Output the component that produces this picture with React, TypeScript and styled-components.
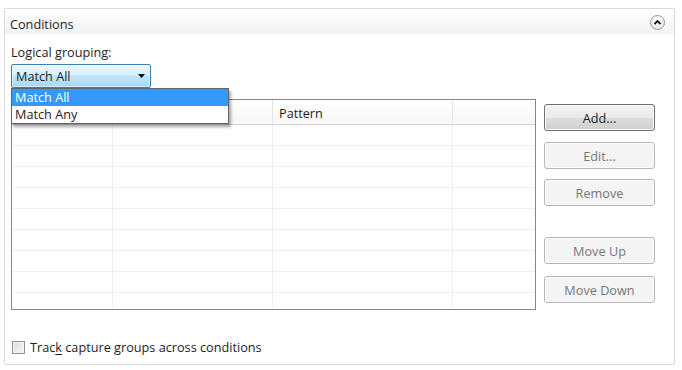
import React from "react";
import styled, { createGlobalStyle } from "styled-components";

const Global = createGlobalStyle`
  html, body { margin: 0; padding: 0; background: #ffffff; }
  body { font-family: "Open Sans", "Noto Sans", sans-serif; font-size: 12.7px; color: #1e1e1e; }
  * { box-sizing: border-box; }
`;

const Page = styled.div`
  width: 682px;
  height: 370px;
  padding: 8px 7px 5px 4px;
  background: #ffffff;
`;

const Panel = styled.section`
  width: 671px;
  height: 357px;
  border: 1px solid #dadada;
  border-radius: 2px;
  display: flex;
  flex-direction: column;
`;

const Header = styled.div`
  height: 25px;
  display: flex;
  align-items: center;
  justify-content: space-between;
  padding: 0 9px 0 5px;
  background: linear-gradient(#ffffff, #f2f2f2);
`;

const Title = styled.span`
  font-size: 12.7px;
  padding-top: 5px;
`;

const CollapseButton = styled.button`
  width: 15px;
  height: 15px;
  border-radius: 50%;
  border: 1px solid #9a9a9a;
  background: radial-gradient(circle at 50% 30%, #ffffff, #e2e2e2);
  padding: 0;
  display: flex;
  align-items: center;
  justify-content: center;
  margin-top: 2px;
`;

const Body = styled.div`
  flex: 1;
  display: flex;
  flex-direction: column;
  padding: 10px 6px 0 6px;
`;

const Label = styled.div`
  font-size: 12.7px;
  line-height: 16px;
  height: 16px;
`;

const U = styled.span`
  text-decoration: underline;
  text-underline-offset: 2px;
`;

const ComboWrap = styled.div`
  position: relative;
  margin-top: 4px;
  width: 140px;
  z-index: 2;
`;

const Combo = styled.div`
  height: 24px;
  border: 1px solid #3c7fb1;
  border-radius: 2px;
  background: linear-gradient(#eaf6fd 0%, #d9f0fc 45%, #bee6fd 50%, #a7d9f5 100%);
  display: flex;
  align-items: center;
  justify-content: space-between;
  padding: 0 5px 0 4px;
  font-size: 12.7px;
  box-shadow: inset 0 0 0 1px rgba(255, 255, 255, 0.5);
`;

const DropList = styled.ul`
  position: absolute;
  left: 0;
  top: 24px;
  width: 218px;
  margin: 0;
  padding: 0;
  list-style: none;
  background: #ffffff;
  border: 1px solid #646464;
  box-shadow: 2px 3px 3px rgba(0, 0, 0, 0.35);
`;

const DropItem = styled.li<{ $active?: boolean }>`
  height: 17px;
  line-height: 17px;
  padding-left: 3px;
  font-size: 12.7px;
  background: ${(p) => (p.$active ? "#3399ff" : "transparent")};
  color: ${(p) => (p.$active ? "#ffffff" : "#1e1e1e")};
`;

const Main = styled.div`
  display: flex;
  gap: 8px;
  margin-top: 11px;
`;

const Grid = styled.div`
  width: 525px;
  height: 211px;
  border: 1px solid #828790;
  display: flex;
  flex-direction: column;
  overflow: hidden;
`;

const HeadRow = styled.div`
  display: grid;
  grid-template-columns: 101px 160px 180px 1fr;
  height: 25px;
  flex-shrink: 0;
  border-bottom: 1px solid #d5d5d5;
  background: linear-gradient(#ffffff, #f6f7f8);
`;

const HeadCell = styled.div`
  border-right: 1px solid #e3e4e6;
  padding: 4px 0 0 6px;
  font-size: 12.7px;
  &:last-child { border-right: none; }
`;

const Row = styled.div`
  display: grid;
  grid-template-columns: 101px 160px 180px 1fr;
  height: 21px;
  flex-shrink: 0;
  border-bottom: 1px solid #f0f0f0;
`;

const Cell = styled.div`
  border-right: 1px solid #f0f0f0;
  &:last-child { border-right: none; }
`;

const Buttons = styled.div`
  display: flex;
  flex-direction: column;
  padding-top: 5px;
`;

const Btn = styled.button<{ $default?: boolean; $gap?: number }>`
  width: 111px;
  height: 27px;
  margin-top: ${(p) => p.$gap ?? 0}px;
  border-radius: 3px;
  font-family: "Open Sans", "Noto Sans", sans-serif;
  font-size: 12.7px;
  padding: 0;
  border: 1px solid ${(p) => (p.$default ? "#707070" : "#b7b7b7")};
  color: ${(p) => (p.$default ? "#1e1e1e" : "#777777")};
  background: ${(p) =>
    p.$default
      ? "linear-gradient(#f2f2f2 0%, #ebebeb 50%, #dddddd 51%, #cfcfcf 100%)"
      : "#f4f4f4"};
  box-shadow: ${(p) => (p.$default ? "inset 0 0 0 1px #fbfbfb" : "inset 0 0 0 1px #fcfcfc")};
`;

const CheckRow = styled.label`
  display: flex;
  align-items: center;
  gap: 5px;
  margin-top: auto;
  margin-bottom: 8px;
  padding-left: 1px;
  font-size: 12.7px;
`;

const Box = styled.span`
  width: 13px;
  height: 13px;
  border: 1px solid #8e8f8f;
  background: linear-gradient(135deg, #dcdcdc, #f6f6f6);
  box-shadow: inset 0 0 0 1px #f4f4f4;
`;

const rows = Array.from({ length: 9 });

export default function App() {
  return (
    <>
      <Global />
      <Page>
        <Panel>
          <Header>
            <Title>Conditions</Title>
            <CollapseButton aria-label="Collapse">
              <svg width="9" height="7" viewBox="0 0 9 7">
                <path d="M1.5 5 L4.5 2 L7.5 5" fill="none" stroke="#1a1a1a" strokeWidth="1.8" />
              </svg>
            </CollapseButton>
          </Header>
          <Body>
            <Label>
              Logical <U>g</U>rouping:
            </Label>
            <ComboWrap>
              <Combo>
                <span>Match All</span>
                <svg width="7" height="4" viewBox="0 0 7 4">
                  <path d="M0 0 H7 L3.5 4 Z" fill="#000" />
                </svg>
              </Combo>
              <DropList>
                <DropItem $active>Match All</DropItem>
                <DropItem>Match Any</DropItem>
              </DropList>
            </ComboWrap>
            <Main>
              <Grid>
                <HeadRow>
                  <HeadCell />
                  <HeadCell />
                  <HeadCell>Pattern</HeadCell>
                  <HeadCell />
                </HeadRow>
                {rows.map((_, i) => (
                  <Row key={i}>
                    <Cell />
                    <Cell />
                    <Cell />
                    <Cell />
                  </Row>
                ))}
              </Grid>
              <Buttons>
                <Btn $default>Add...</Btn>
                <Btn $gap={11}>Edit...</Btn>
                <Btn $gap={10}>Remove</Btn>
                <Btn $gap={31}>Move Up</Btn>
                <Btn $gap={12}>Move Down</Btn>
              </Buttons>
            </Main>
            <CheckRow>
              <Box />
              <span>
                Trac<U>k</U> capture groups across conditions
              </span>
            </CheckRow>
          </Body>
        </Panel>
      </Page>
    </>
  );
}
